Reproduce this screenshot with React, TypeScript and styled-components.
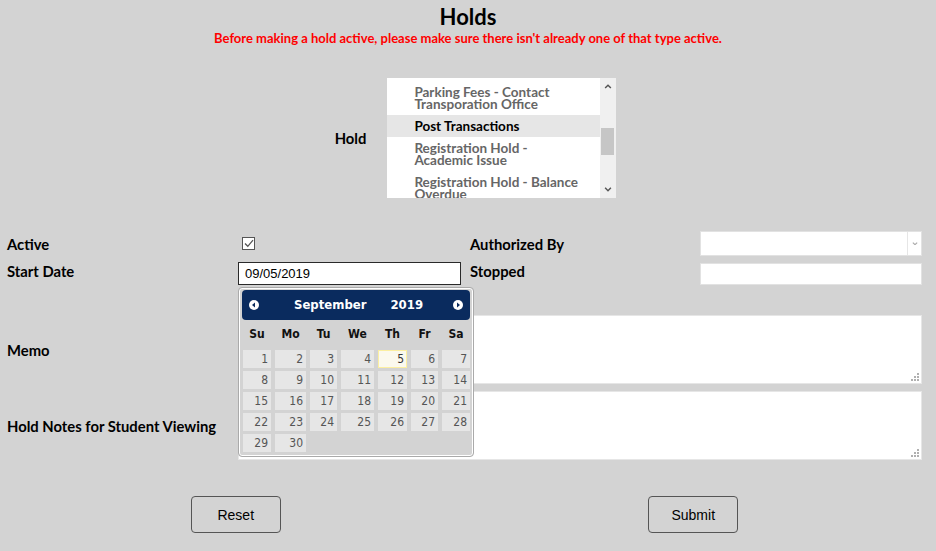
import React from "react";
import styled, { createGlobalStyle } from "styled-components";

const GlobalStyle = createGlobalStyle`
  html, body { margin: 0; padding: 0; background: #d3d3d3; }
  body { font-family: Lato, "Noto Sans", sans-serif; color: #000; }
  * { box-sizing: border-box; }
`;

const LABEL_FONT = `Lato, "Noto Sans", sans-serif`;
const CAL_FONT = `"DejaVu Sans Condensed", "DejaVu Sans", Verdana, sans-serif`;
const ARIAL = `"Liberation Sans", Arial, sans-serif`;

const Page = styled.div`
  width: 936px;
  height: 551px;
  padding-top: 5px;
  overflow: hidden;
`;

const Title = styled.h1`
  margin: 0;
  font: 700 22px/24px ${LABEL_FONT};
  text-align: center;
  color: #000;
`;

const Warning = styled.p`
  margin: 1px 0 0;
  font: 700 13px/16px ${LABEL_FONT};
  color: #ff0000;
  text-align: center;
`;

const HoldRow = styled.div`
  margin-top: 32px;
  display: flex;
  justify-content: center;
  align-items: center;
  gap: 21px;
  padding-left: 15px;
`;

const Label = styled.div<{ $align?: string }>`
  font: 700 14.8px/18px ${LABEL_FONT};
  color: #000;
  white-space: nowrap;
  align-self: ${(p) => p.$align || "center"};
`;

const ListBox = styled.div`
  width: 229px;
  height: 120px;
  background: #fff;
  display: flex;
`;

const ListItems = styled.div`
  flex: 1;
  overflow: hidden;
  padding-top: 3px;
`;

const ListItem = styled.div<{ $selected?: boolean }>`
  padding: 5px 8px 5px 27px;
  font: 700 13.5px/12px ${LABEL_FONT};
  color: ${(p) => (p.$selected ? "#000" : "#666")};
  background: ${(p) => (p.$selected ? "#e6e6e6" : "transparent")};
`;

const ScrollBar = styled.div`
  width: 16px;
  background: #f0f0f0;
  display: flex;
  flex-direction: column;
`;

const ScrollArrow = styled.div`
  height: 17px;
  display: flex;
  align-items: center;
  justify-content: center;
`;

const ScrollTrack = styled.div`
  flex: 1;
  padding: 33px 2px 0 1px;
`;

const ScrollThumb = styled.div`
  height: 27px;
  background: #c6c6c6;
`;

const Form = styled.div`
  padding: 0 14px 0 7px;
`;

const FieldGrid = styled.div`
  margin-top: 33px;
  display: grid;
  grid-template-columns: 231px 232px 230px 222px;
  grid-template-rows: 25px 23px;
  row-gap: 6px;
`;

const CheckBox = styled.span`
  width: 13px;
  height: 13px;
  margin-left: 4px;
  align-self: center;
  border: 1px solid #555;
  background: #fff;
  display: flex;
  align-items: center;
  justify-content: center;
`;

const SelectBox = styled.div`
  width: 222px;
  height: 25px;
  background: #fff;
  border: 1px solid #e2e2e2;
  display: flex;
  justify-content: flex-end;
`;

const SelectArrow = styled.div`
  width: 14px;
  border-left: 1px solid #e6e6e6;
  display: flex;
  align-items: center;
  justify-content: center;
`;

const DateCell = styled.div`
  position: relative;
`;

const DateInput = styled.div`
  width: 223px;
  height: 23px;
  border: 1px solid #2a2a2a;
  background: #fff;
  padding: 0 6px;
  font: 400 13px/21px ${ARIAL};
  color: #000;
`;

const TextInput = styled.div`
  width: 222px;
  height: 22px;
  align-self: end;
  background: #fff;
  border: 1px solid #e2e2e2;
`;

const NoteGrid = styled.div`
  margin-top: 30px;
  display: grid;
  grid-template-columns: 231px 684px;
  grid-template-rows: 69px 69px;
  row-gap: 7px;
`;

const AreaWrap = styled.div`
  position: relative;
`;

const TextArea = styled.textarea`
  display: block;
  width: 100%;
  height: 69px;
  border: 1px solid #e6e6e6;
  background: #fff;
  resize: none;
  outline: none;
  margin: 0;
`;

const Grip = styled.svg`
  position: absolute;
  right: 3px;
  bottom: 3px;
`;

const ButtonRow = styled.div`
  margin-top: 36px;
  display: grid;
  grid-template-columns: 1fr 1fr;
  justify-items: center;
`;

const Button = styled.button`
  width: 90px;
  height: 37px;
  border: 1px solid #555;
  border-radius: 4px;
  background: transparent;
  font: 400 14px ${ARIAL};
  color: #000;
  padding: 0;
`;

/* Calendar */
const Calendar = styled.div`
  position: absolute;
  top: 25px;
  left: 0;
  width: 236px;
  height: 170px;
  border: 1px solid #aaa;
  border-radius: 4px;
  box-shadow: inset 0 0 0 1px #fff;
  background: #d3d3d3;
  padding: 2px 3px 0;
  z-index: 5;
`;

const CalHeader = styled.div`
  height: 30px;
  background: #0a2b5e;
  border-radius: 4px;
  display: flex;
  align-items: center;
  justify-content: space-between;
  padding: 0 7px;
`;

const CalTitle = styled.div`
  display: flex;
  gap: 24px;
  padding-left: 5px;
  font: 700 13px/16px ${CAL_FONT};
  color: #fff;
`;

const DayGrid = styled.div`
  display: grid;
  grid-template-columns: 28px 31px 27px 33px 29px 27px 28px;
  column-gap: 4px;
  padding-left: 1px;
`;

const WeekRow = styled(DayGrid)`
  height: 28px;
  align-items: center;
  margin-bottom: 2px;
`;

const WeekDay = styled.div`
  font: 700 12px/16px ${CAL_FONT};
  color: #111;
  text-align: center;
`;

const Days = styled(DayGrid)`
  grid-auto-rows: 18px;
  row-gap: 3px;
`;

const Day = styled.div<{ $today?: boolean }>`
  background: ${(p) => (p.$today ? "#fbf9ee" : "#e6e6e6")};
  border: 1px solid ${(p) => (p.$today ? "#fcefa1" : "#e6e6e6")};
  color: ${(p) => (p.$today ? "#363636" : "#555")};
  font: 400 12px/16px ${CAL_FONT};
  text-align: right;
  padding-right: 2px;
`;

const NavIcon = ({ dir }: { dir: "prev" | "next" }) => (
  <svg width="10" height="10" viewBox="0 0 10 10">
    <circle cx="5" cy="5" r="5" fill="#fff" />
    {dir === "prev" ? (
      <polygon points="3,5 6,2.6 6,7.4" fill="#0a2b5e" />
    ) : (
      <polygon points="7,5 4,2.6 4,7.4" fill="#0a2b5e" />
    )}
  </svg>
);

const Chevron = ({ up, color = "#555", w = 8 }: { up?: boolean; color?: string; w?: number }) => (
  <svg width={w} height={w * 0.6} viewBox="0 0 8 5">
    <polyline
      points={up ? "1,4.2 4,1.2 7,4.2" : "1,0.8 4,3.8 7,0.8"}
      fill="none"
      stroke={color}
      strokeWidth="1.5"
    />
  </svg>
);

const GripIcon = () => (
  <Grip width="8" height="8" viewBox="0 0 8 8">
    {[
      [6, 0],
      [3, 3],
      [6, 3],
      [0, 6],
      [3, 6],
      [6, 6],
    ].map(([x, y], i) => (
      <rect key={i} x={x} y={y} width="2" height="2" fill="#b0b0b0" />
    ))}
  </Grip>
);

const holds = [
  { lines: ["Parking Fees - Contact", "Transporation Office"] },
  { lines: ["Post Transactions"], selected: true },
  { lines: ["Registration Hold -", "Academic Issue"] },
  { lines: ["Registration Hold - Balance", "Overdue"] },
];

const weekDays = ["Su", "Mo", "Tu", "We", "Th", "Fr", "Sa"];
const days = Array.from({ length: 30 }, (_, i) => i + 1);

export default function App() {
  return (
    <Page>
      <GlobalStyle />
      <Title>Holds</Title>
      <Warning>Before making a hold active, please make sure there isn't already one of that type active.</Warning>

      <HoldRow>
        <Label>Hold</Label>
        <ListBox>
          <ListItems>
            {holds.map((h, i) => (
              <ListItem key={i} $selected={h.selected}>
                {h.lines.map((l, j) => (
                  <div key={j}>{l}</div>
                ))}
              </ListItem>
            ))}
          </ListItems>
          <ScrollBar>
            <ScrollArrow>
              <Chevron up />
            </ScrollArrow>
            <ScrollTrack>
              <ScrollThumb />
            </ScrollTrack>
            <ScrollArrow>
              <Chevron />
            </ScrollArrow>
          </ScrollBar>
        </ListBox>
      </HoldRow>

      <Form>
        <FieldGrid>
          <Label>Active</Label>
          <CheckBox>
            <svg width="10" height="9" viewBox="0 0 10 9">
              <polyline points="1,4.5 3.8,7.3 9,1.2" fill="none" stroke="#555" strokeWidth="1.3" />
            </svg>
          </CheckBox>
          <Label>Authorized By</Label>
          <SelectBox>
            <SelectArrow>
              <Chevron color="#aaa" w={6} />
            </SelectArrow>
          </SelectBox>

          <Label $align="start">Start Date</Label>
          <DateCell>
            <DateInput>09/05/2019</DateInput>
            <Calendar>
              <CalHeader>
                <NavIcon dir="prev" />
                <CalTitle>
                  <span>September</span>
                  <span>2019</span>
                </CalTitle>
                <NavIcon dir="next" />
              </CalHeader>
              <WeekRow>
                {weekDays.map((d) => (
                  <WeekDay key={d}>{d}</WeekDay>
                ))}
              </WeekRow>
              <Days>
                {days.map((d) => (
                  <Day key={d} $today={d === 5}>
                    {d}
                  </Day>
                ))}
              </Days>
            </Calendar>
          </DateCell>
          <Label $align="start">Stopped</Label>
          <TextInput />
        </FieldGrid>

        <NoteGrid>
          <Label>Memo</Label>
          <AreaWrap>
            <TextArea />
            <GripIcon />
          </AreaWrap>
          <Label>Hold Notes for Student Viewing</Label>
          <AreaWrap>
            <TextArea />
            <GripIcon />
          </AreaWrap>
        </NoteGrid>

        <ButtonRow>
          <Button>Reset</Button>
          <Button>Submit</Button>
        </ButtonRow>
      </Form>
    </Page>
  );
}
